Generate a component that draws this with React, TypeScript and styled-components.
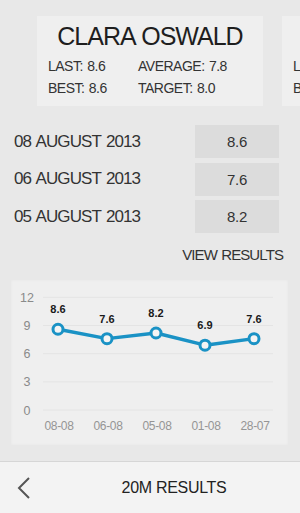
import React from "react";
import styled, { createGlobalStyle } from "styled-components";

const Global = createGlobalStyle`
  html, body { margin: 0; padding: 0; }
  body {
    background: #e8e8e8;
    font-family: "Liberation Sans", Arial, sans-serif;
    color: #2b2b2b;
    -webkit-font-smoothing: antialiased;
  }
`;

const Page = styled.div`
  width: 300px;
  height: 513px;
  display: flex;
  flex-direction: column;
  overflow: hidden;
  background: #e8e8e8;
`;

const Carousel = styled.div`
  display: flex;
  gap: 19px;
  padding: 16px 0 0 37px;
  overflow: hidden;
`;

const AthleteCard = styled.div`
  flex: 0 0 226px;
  height: 90px;
  box-sizing: border-box;
  background: #efefef;
  padding: 6px 11px 0 11px;
`;

const Name = styled.div`
  font-size: 25px;
  line-height: 28px;
  letter-spacing: -1px;
  word-spacing: 1px;
  text-align: center;
  color: #1e1e1e;
  white-space: nowrap;
`;

const Stats = styled.div`
  display: grid;
  grid-template-columns: 90px auto;
  margin-top: 5px;
`;

const Stat = styled.div`
  font-size: 14px;
  line-height: 22px;
  letter-spacing: -0.5px;
  word-spacing: 1px;
  color: #333;
  white-space: nowrap;
`;

const Results = styled.div`
  display: flex;
  flex-direction: column;
  gap: 4.5px;
  margin-top: 19px;
  padding: 0 21px 0 14px;
`;

const ResultRow = styled.div`
  display: flex;
  align-items: center;
  justify-content: space-between;
  height: 33px;
`;

const DateText = styled.span`
  font-size: 17px;
  letter-spacing: -0.9px;
  word-spacing: 1.5px;
  color: #333;
`;

const ValueBox = styled.div`
  width: 84px;
  height: 33px;
  background: #dcdcdc;
  display: flex;
  align-items: center;
  justify-content: center;
  font-size: 15px;
  letter-spacing: -0.3px;
  color: #333;
`;

const ViewResults = styled.div`
  align-self: flex-end;
  margin: 11.5px 17px 0 0;
  font-size: 15px;
  line-height: 20px;
  letter-spacing: -0.9px;
  word-spacing: 1px;
  color: #333;
`;

const ChartCard = styled.div`
  margin: 15.5px 12px 0 11px;
  height: 165px;
  background: #efefef;
  box-shadow: inset 0 0 3px rgba(0, 0, 0, 0.04);
`;

const ChartSvg = styled.svg`
  display: block;
  font-family: "Liberation Sans", Arial, sans-serif;
`;

const Footer = styled.div`
  margin-top: auto;
  height: 51px;
  border-top: 1px solid #d6d6d6;
  background: #f3f3f3;
  display: flex;
  align-items: center;
`;

const BackButton = styled.div`
  width: 48px;
  height: 51px;
  display: flex;
  align-items: center;
  justify-content: flex-start;
  padding-left: 17px;
  box-sizing: border-box;
`;

const FooterTitle = styled.div`
  flex: 1;
  text-align: center;
  font-size: 16px;
  letter-spacing: -0.3px;
  color: #222;
`;

const athletes = [
  { name: "CLARA OSWALD", last: "8.6", avg: "7.8", best: "8.6", target: "8.0" },
  { name: "RORY WILLIAMS", last: "7.9", avg: "7.4", best: "8.1", target: "7.5" },
];

const results = [
  { date: "08 AUGUST 2013", value: "8.6" },
  { date: "06 AUGUST 2013", value: "7.6" },
  { date: "05 AUGUST 2013", value: "8.2" },
];

const points = [
  { label: "08-08", v: 8.6 },
  { label: "06-08", v: 7.6 },
  { label: "05-08", v: 8.2 },
  { label: "01-08", v: 6.9 },
  { label: "28-07", v: 7.6 },
];

const Y0 = 130;
const UNIT = 9.39;
const yOf = (v: number) => Y0 - v * UNIT;
const xOf = (i: number) => 47 + i * 49;

function Chart() {
  const blue = "#1a92c5";
  const ticks = [0, 3, 6, 9, 12];
  const line = points.map((p, i) => `${xOf(i)},${yOf(p.v)}`).join(" ");
  return (
    <ChartSvg width="277" height="165" viewBox="0 0 277 165">
      {ticks.map((t) => (
        <g key={t}>
          <line x1="32" x2="262" y1={yOf(t)} y2={yOf(t)} stroke="#e4e4e4" strokeWidth="1" />
          <text x="16" y={yOf(t) + 4.5} fontSize="12.5" fill="#8a8a8a" textAnchor="middle">
            {t}
          </text>
        </g>
      ))}
      <polyline points={line} fill="none" stroke={blue} strokeWidth="3.4" strokeLinejoin="round" />
      {points.map((p, i) => (
        <g key={p.label}>
          <circle cx={xOf(i)} cy={yOf(p.v)} r="5" fill="#f4f4f4" stroke={blue} strokeWidth="3" />
          <text x={xOf(i)} y={yOf(p.v) - 16} fontSize="11" fontWeight="bold" fill="#1a1a1a" textAnchor="middle">
            {p.v.toFixed(1)}
          </text>
          <text x={xOf(i) + 1} y="150" fontSize="12" fill="#959595" textAnchor="middle" letterSpacing="-0.3">
            {p.label}
          </text>
        </g>
      ))}
    </ChartSvg>
  );
}

export default function App() {
  return (
    <>
      <Global />
      <Page>
        <Carousel>
          {athletes.map((a) => (
            <AthleteCard key={a.name}>
              <Name>{a.name}</Name>
              <Stats>
                <Stat>LAST: {a.last}</Stat>
                <Stat>AVERAGE: {a.avg}</Stat>
                <Stat>BEST: {a.best}</Stat>
                <Stat>TARGET: {a.target}</Stat>
              </Stats>
            </AthleteCard>
          ))}
        </Carousel>
        <Results>
          {results.map((r) => (
            <ResultRow key={r.date}>
              <DateText>{r.date}</DateText>
              <ValueBox>{r.value}</ValueBox>
            </ResultRow>
          ))}
        </Results>
        <ViewResults>VIEW RESULTS</ViewResults>
        <ChartCard>
          <Chart />
        </ChartCard>
        <Footer>
          <BackButton>
            <svg width="14" height="22" viewBox="0 0 14 22">
              <polyline points="12,1 2,11 12,21" fill="none" stroke="#555" strokeWidth="2" />
            </svg>
          </BackButton>
          <FooterTitle>20M RESULTS</FooterTitle>
        </Footer>
      </Page>
    </>
  );
}
